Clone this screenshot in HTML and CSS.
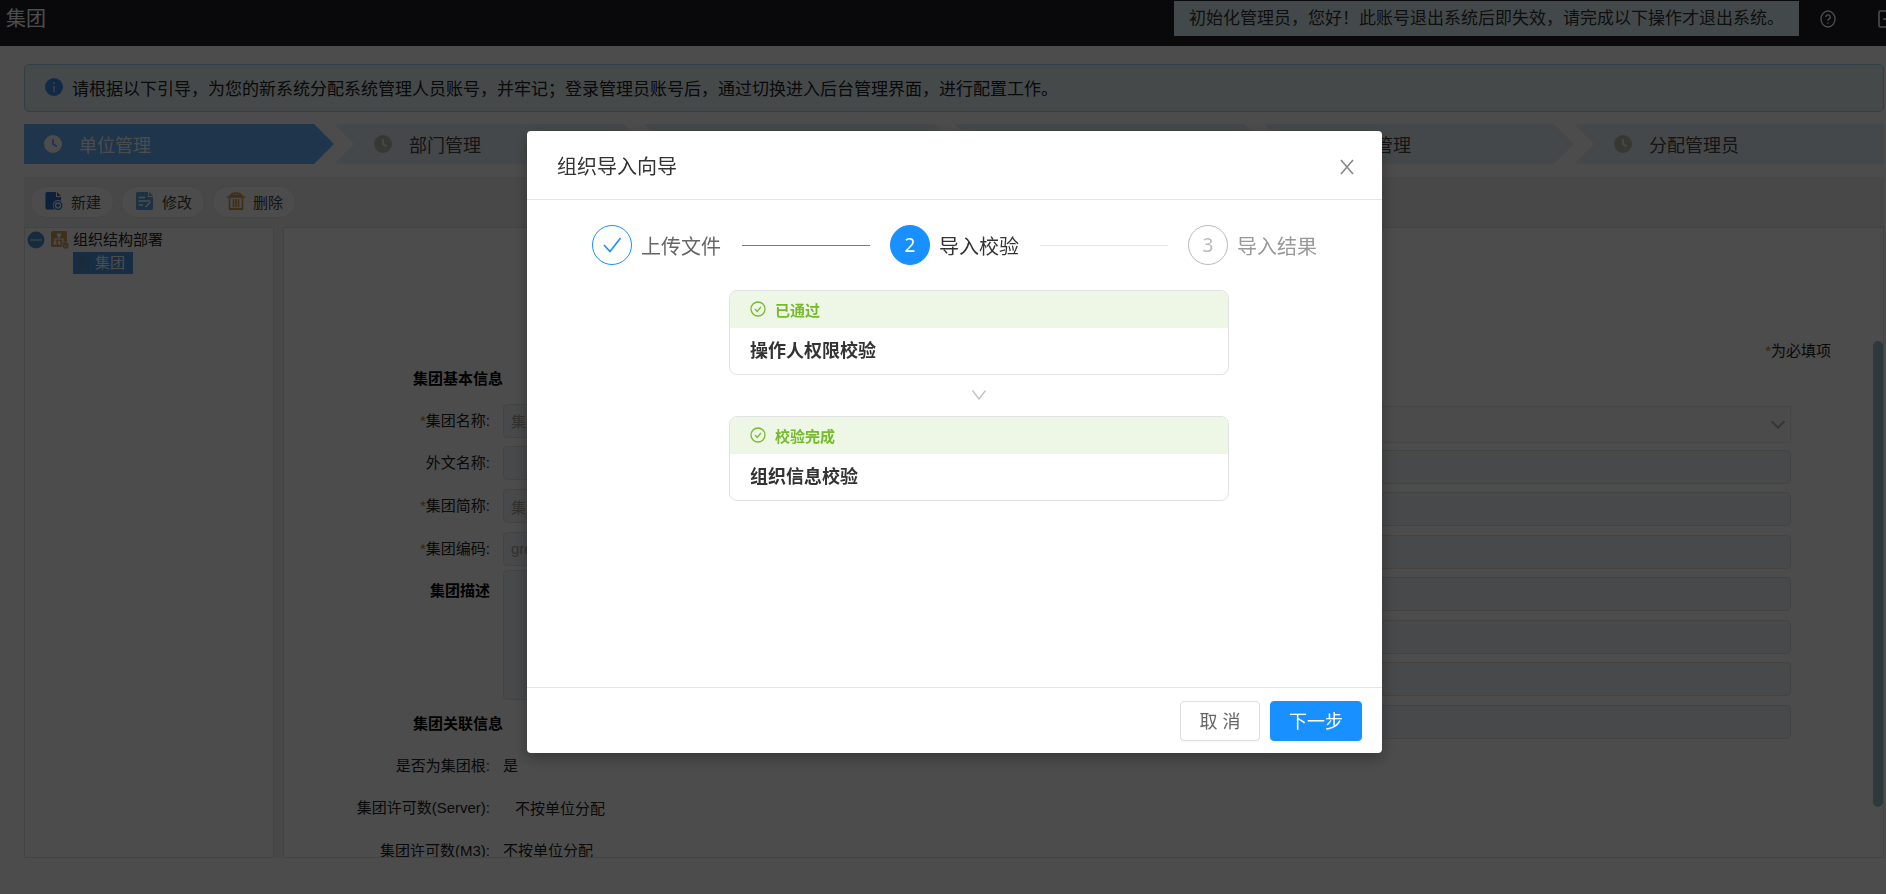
FILE: index.html
```html
<!DOCTYPE html>
<html lang="zh-CN">
<head>
    <meta charset="UTF-8">
    <meta name="viewport" content="width=device-width, initial-scale=1.0">
    <title>集团</title>
    <link rel="stylesheet" href="styles.css">
</head>
<body>
    <div class="page">
        <header class="topbar">
            <h1>集团</h1>
            <div class="topbar-right">
                <p class="notice">初始化管理员，您好！此账号退出系统后即失效，请完成以下操作才退出系统。</p>
                <svg class="help-icon" viewBox="0 0 16 18" fill="none" stroke="currentColor" stroke-width="1.4">
                    <ellipse cx="8" cy="9" rx="7" ry="8"/>
                    <path d="M5.800 7a2.200 2.200 0 1 1 3.300 2c-.8.4-1.100.8-1.100 1.800M8 12.400v1.400"/>
                </svg>
                <svg class="exit-icon" viewBox="0 0 20 18" fill="none" stroke="currentColor" stroke-width="1.6">
                    <path d="M12 5V2.600C12 1.600 11.600 1 10.500 1H2.500C1.500 1 1 1.600 1 2.600v12.800c0 1 .5 1.600 1.500 1.600h8c1 0 1.500-.6 1.500-1.600V13M5 9h13M15 6l3 3-3 3"/>
                </svg>
            </div>
        </header>

        <main class="content">
            <div class="alert">
                <svg class="alert-icon" viewBox="0 0 18 18">
                    <circle cx="9" cy="9" r="9" fill="#3d8ee6"/>
                    <path d="M9 4v2M9 8v6" stroke="#a9cdf2" stroke-width="1.8"/>
                </svg>
                <p>请根据以下引导，为您的新系统分配系统管理人员账号，并牢记；登录管理员账号后，通过切换进入后台管理界面，进行配置工作。</p>
            </div>

            <ol class="guide">
                <li class="active">
                    <svg class="clock" viewBox="0 0 18 18"><circle cx="9" cy="9" r="9" fill="currentColor"/><path d="M9 4v5l4 2.500"/></svg>
                    <span>单位管理</span>
                </li>
                <li>
                    <svg class="clock" viewBox="0 0 18 18"><circle cx="9" cy="9" r="9" fill="currentColor"/><path d="M9 4v5l4 2.500"/></svg>
                    <span>部门管理</span>
                </li>
                <li>
                    <svg class="clock" viewBox="0 0 18 18"><circle cx="9" cy="9" r="9" fill="currentColor"/><path d="M9 4v5l4 2.500"/></svg>
                    <span>岗位管理</span>
                </li>
                <li>
                    <svg class="clock" viewBox="0 0 18 18"><circle cx="9" cy="9" r="9" fill="currentColor"/><path d="M9 4v5l4 2.500"/></svg>
                    <span>职级管理</span>
                </li>
                <li>
                    <svg class="clock" viewBox="0 0 18 18"><circle cx="9" cy="9" r="9" fill="currentColor"/><path d="M9 4v5l4 2.500"/></svg>
                    <span>人员管理</span>
                </li>
                <li>
                    <svg class="clock" viewBox="0 0 18 18"><circle cx="9" cy="9" r="9" fill="currentColor"/><path d="M9 4v5l4 2.500"/></svg>
                    <span>分配管理员</span>
                </li>
            </ol>

            <div class="toolbar">
                <button type="button">
                    <svg viewBox="0 0 18 18">
                        <path d="M2 0h9v5h5v4a5 5 0 0 0-6 8.500H2a1.500 1.500 0 0 1-1.500-1.500V1.500A1.500 1.500 0 0 1 2 0zM12 0l4 4h-4z" fill="#2c6fc4"/>
                        <circle cx="13" cy="13.500" r="3.800" fill="none" stroke="#2c6fc4" stroke-width="1.300"/>
                        <path d="M13 11.500v4M11 13.500h4" stroke="#2c6fc4" stroke-width="1.300"/>
                    </svg>
                    新建
                </button>
                <button type="button">
                    <svg viewBox="0 0 18 18">
                        <path d="M1.500 0H12v5h5v11.500A1.500 1.500 0 0 1 15.500 18h-14A1.500 1.500 0 0 1 0 16.500v-15A1.500 1.500 0 0 1 1.500 0zM13 0l4 4h-4z" fill="#63a5e8"/>
                        <path d="M2.500 5.500H9M2.500 9H14M2.500 13H7M9.500 15l5-5" stroke="#fff" stroke-width="1.600"/>
                    </svg>
                    修改
                </button>
                <button type="button">
                    <svg viewBox="0 0 18 18" fill="none" stroke="#cf9c4f" stroke-width="1.600">
                        <path d="M0 5h18M3 4C4 2 6 1 9 1s5 1 6 3zM2.500 6v10.500h13V6M6.500 7v8M9 7v8M11.500 7v8"/>
                        <path d="M3 3.500h12M2 17h14" stroke-width="2"/>
                    </svg>
                    删除
                </button>
            </div>

            <div class="workspace">
                <aside class="tree">
                    <div class="tree-root">
                        <svg class="tree-toggle" viewBox="0 0 18 18">
                            <circle cx="9" cy="9" r="8.500" fill="#4c8fd6"/>
                            <path d="M3 9h12" stroke="#a9c9ea" stroke-width="1.800"/>
                        </svg>
                        <svg class="tree-icon" viewBox="0 0 18 18">
                            <rect width="16" height="16" rx="1.500" fill="#d2a254"/>
                            <path d="M8 4v4M4 11V8h8v3" fill="none" stroke="#fff" stroke-width="1.200"/>
                            <path d="M6 2.500h4v3H6zM2.500 10.500h3v3h-3zM7 10.500h2.500v3H7z" fill="#fff"/>
                            <circle cx="14.500" cy="14.500" r="3.500" fill="#d2a254" stroke="#fff" stroke-width=".6"/>
                            <path d="M13 14.500l1 1 2-2" fill="none" stroke="#fff" stroke-width=".8"/>
                        </svg>
                        <span>组织结构部署</span>
                    </div>
                    <a href="#" class="tree-node">
                        <svg class="tree-icon" viewBox="0 0 18 18" fill="none" stroke="#6389b5" stroke-width="1.200">
                            <path d="M6 15V3l5-1v13M11 6l4 1v8M4 15h13M8 5v7"/>
                        </svg>
                        <span>集团</span>
                    </a>
                </aside>

                <section class="detail">
                    <p class="required-note"><i>*</i>为必填项</p>
                    <form class="form">
                        <div class="form-col">
                            <div class="form-rows">
                                <h2>集团基本信息</h2>
                                <div class="form-row">
                                    <label for="name"><i>*</i>集团名称:</label>
                                    <input type="text" id="name" value="集团" disabled>
                                </div>
                                <div class="form-row">
                                    <label for="foreignName">外文名称:</label>
                                    <input type="text" id="foreignName" disabled>
                                </div>
                                <div class="form-row">
                                    <label for="shortName"><i>*</i>集团简称:</label>
                                    <input type="text" id="shortName" value="集团" disabled>
                                </div>
                                <div class="form-row">
                                    <label for="code"><i>*</i>集团编码:</label>
                                    <input type="text" id="code" value="group" disabled>
                                </div>
                            </div>
                            <div class="form-row desc">
                                <label for="desc">集团描述</label>
                                <textarea id="desc" disabled></textarea>
                            </div>
                            <div class="form-rows tail">
                                <h2>集团关联信息</h2>
                                <div class="form-row"><span class="key">是否为集团根:</span><span class="value">是</span></div>
                                <div class="form-row"><span class="key">集团许可数(Server):</span><span class="value indent">不按单位分配</span></div>
                                <div class="form-row"><span class="key">集团许可数(M3):</span><span class="value">不按单位分配</span></div>
                            </div>
                        </div>
                        <div class="form-col side">
                            <div class="select-wrap"><select aria-label="状态" disabled><option></option></select></div>
                            <input type="text" aria-label="负责人" disabled>
                            <input type="text" aria-label="地址" disabled>
                            <input type="text" aria-label="邮编" disabled>
                            <input type="text" aria-label="电话" disabled>
                            <input type="text" aria-label="传真" disabled>
                            <input type="text" aria-label="网址" disabled>
                            <input type="text" aria-label="邮箱" disabled>
                        </div>
                    </form>
                    <div class="scrollbar"></div>
                </section>
            </div>
        </main>
    </div>

    <div class="overlay">
        <div class="modal" role="dialog" aria-labelledby="wizardTitle">
            <div class="modal-header">
                <h2 id="wizardTitle">组织导入向导</h2>
                <button type="button" class="close-btn" aria-label="关闭">
                    <svg viewBox="0 0 14 16" fill="none" stroke="currentColor" stroke-width="1.600"><path d="M1 1l12 14M13 1L1 15"/></svg>
                </button>
            </div>
            <div class="modal-body">
                <ol class="steps">
                    <li class="done">
                        <span class="step-num">
                            <svg viewBox="0 0 18 16" fill="none" stroke="currentColor" stroke-width="1.600"><path d="M1 8l6 6.500L17.500 1"/></svg>
                        </span>
                        <span>上传文件</span>
                    </li>
                    <li class="current"><span class="step-num">2</span><span>导入校验</span></li>
                    <li class="wait"><span class="step-num">3</span><span>导入结果</span></li>
                </ol>

                <div class="checks">
                    <div class="check-card">
                        <div class="check-status">
                            <svg viewBox="0 0 16 16" fill="none" stroke="currentColor" stroke-width="1.300"><circle cx="8" cy="8" r="7"/><path d="M5 8l2.200 2.400L11 5.800"/></svg>
                            已通过
                        </div>
                        <div class="check-title">操作人权限校验</div>
                    </div>
                    <svg class="arrow" viewBox="0 0 14 10" fill="none" stroke="#bcc0c0" stroke-width="1.300"><path d="M.5.5L7 9l6.500-8.500"/></svg>
                    <div class="check-card">
                        <div class="check-status">
                            <svg viewBox="0 0 16 16" fill="none" stroke="currentColor" stroke-width="1.300"><circle cx="8" cy="8" r="7"/><path d="M5 8l2.200 2.400L11 5.800"/></svg>
                            校验完成
                        </div>
                        <div class="check-title">组织信息校验</div>
                    </div>
                </div>
            </div>
            <div class="modal-footer">
                <button type="button" class="cancel-btn">取 消</button>
                <button type="button" class="next-btn">下一步</button>
            </div>
        </div>
    </div>
</body>
</html>
```
FILE: styles.css
```css
* {
    box-sizing: border-box;
}
body {
    margin: 0;
    font-family: "Liberation Sans", "Noto Sans CJK SC", sans-serif;
    font-size: 15px;
    color: #222;
    background: #fff;
    overflow: hidden;
}
h1, h2, p, ol {
    margin: 0;
    padding: 0;
    font-weight: normal;
}
ol {
    list-style: none;
}
i {
    font-style: normal;
    color: #b87840;
}
button, input, select, textarea {
    font-family: inherit;
}
svg {
    flex: none;
}
.page {
    display: flex;
    flex-direction: column;
    height: 100vh;
}

/* top bar */
.topbar {
    display: flex;
    justify-content: space-between;
    flex: none;
    height: 46px;
    padding-left: 6px;
    background: #202028;
    overflow: hidden;
}
.topbar h1 {
    font-size: 20px;
    line-height: 38px;
    color: #fff;
}
.topbar-right {
    display: flex;
    align-items: center;
    height: 37px;
    margin-right: -12px;
    color: #fff;
}
.notice {
    height: 35px;
    padding: 0 15px;
    font-size: 17px;
    line-height: 35px;
    white-space: nowrap;
    color: #333;
    background: #e2f5fa;
}
.help-icon {
    width: 16px;
    margin: 0 42px 0 21px;
}
.exit-icon {
    width: 20px;
}

/* page content */
.content {
    display: flex;
    flex-direction: column;
    flex: 1;
    min-height: 0;
    padding: 18px 2px 36px 24px;
}
.alert {
    display: flex;
    align-items: center;
    gap: 9px;
    flex: none;
    height: 48px;
    margin-bottom: 12px;
    padding: 0 0 2px 20px;
    font-size: 17px;
    border: 1px solid #9dd4e6;
    border-radius: 5px;
    background: #e6f5f9;
}
.alert-icon {
    width: 18px;
}
.guide {
    display: grid;
    grid-template-columns: repeat(6, 1fr);
    flex: none;
    height: 40px;
    margin-bottom: 13px;
}
.guide li {
    display: flex;
    align-items: center;
    gap: 17px;
    padding-left: 40px;
    font-size: 18px;
    color: #444;
    background: #e8f2f7;
    clip-path: polygon(0 0, calc(100% - 20px) 0, 100% 50%, calc(100% - 20px) 100%, 0 100%, 20px 50%);
}
.guide li:last-child {
    clip-path: polygon(0 0, 100% 0, 100% 100%, 0 100%, 20px 50%);
}
.guide li.active {
    padding-left: 20px;
    color: #fff;
    background: #64b1ff;
    clip-path: polygon(0 0, calc(100% - 20px) 0, 100% 50%, calc(100% - 20px) 100%, 0 100%);
}
.clock {
    width: 18px;
    color: #b4bcae;
}
.clock path {
    fill: none;
    stroke: #e8f2f7;
    stroke-width: 2;
}
.active .clock {
    color: #fff;
}
.active .clock path {
    stroke: #64b1ff;
}
.toolbar {
    display: flex;
    gap: 7px;
    flex: none;
    height: 50px;
    padding: 9px 6px;
    background: #f1f1f1;
}
.toolbar button {
    display: flex;
    align-items: center;
    justify-content: center;
    gap: 8px;
    width: 84px;
    height: 32px;
    padding: 0 0 2px 2px;
    font-size: 15px;
    color: #444;
    border: 1px solid #e8e8e8;
    border-radius: 16px;
    background: #fff;
}
.toolbar svg {
    width: 18px;
}
.workspace {
    display: flex;
    gap: 9px;
    flex: 1;
    min-height: 0;
    background: #f1f1f1;
}

/* organisation tree */
.tree {
    width: 250px;
    flex: none;
    padding: 0 2px;
    border: 1px solid #dfdfdf;
    background: #fff;
}
.tree-root {
    display: flex;
    align-items: center;
    height: 24px;
}
.tree-root span,
.tree-node span {
    padding-bottom: 3px;
}
.tree-toggle {
    width: 18px;
    margin-right: 6px;
}
.tree-icon {
    width: 18px;
    margin-right: 4px;
}
.tree-node {
    display: inline-flex;
    align-items: center;
    height: 22px;
    margin-left: 46px;
    padding-right: 8px;
    color: #fff;
    text-decoration: none;
    background: #4e96e0;
}

/* detail form */
.detail {
    position: relative;
    flex: 1;
    padding: 116px 92px 0 0;
    border: 1px solid #dfdfdf;
    background: #fff;
    overflow: hidden;
}
.required-note {
    margin-right: -40px;
    line-height: 13px;
    text-align: right;
}
.form {
    display: grid;
    grid-template-columns: 1fr 1fr;
}
.form-rows {
    display: grid;
    grid-auto-rows: 1fr;
    height: 213px;
    align-items: center;
}
.form-rows.tail {
    height: 170px;
}
.form h2 {
    width: 219px;
    padding-bottom: 2px;
    font-size: 15px;
    font-weight: bold;
    text-align: right;
    color: #000;
}
.form-row {
    display: grid;
    grid-template-columns: 219px 1fr;
    align-items: center;
}
.form-row label,
.form-row .key {
    padding: 0 13px 3px 0;
    text-align: right;
}
.form-row .value {
    padding-bottom: 2px;
}
.form-row .indent {
    padding-left: 12px;
}
.form input,
.form select,
.form textarea {
    width: 100%;
    height: 34px;
    padding: 0 7px;
    font-size: 15px;
    color: #a8a498;
    border: 1px solid #dfdfdc;
    border-radius: 4px;
    background: #f1f3f7;
}
.form select {
    display: block;
    height: 37px;
    appearance: none;
    border-radius: 0;
    background: #f8f8f8;
}
.form-row.desc {
    height: 132px;
    align-items: start;
}
.desc label {
    font-weight: bold;
    line-height: 42px;
    color: #000;
}
.form .desc textarea {
    display: block;
    height: 130px;
    resize: none;
}
.form-col.side {
    display: grid;
    grid-auto-rows: 1fr;
    align-items: center;
    height: 386px;
    padding: 46px 0 0 219px;
}
.select-wrap {
    position: relative;
}
.select-wrap::after {
    content: '';
    position: absolute;
    right: 8px;
    top: 11px;
    width: 8px;
    height: 8px;
    border: solid #b4b4b4;
    border-width: 0 2px 2px 0;
    transform: rotate(45deg);
}
.scrollbar {
    position: absolute;
    top: 18%;
    right: 0;
    width: 10px;
    height: 74%;
    border-radius: 5px;
    background: #9cbfcb;
}

/* import wizard */
.overlay {
    position: fixed;
    inset: 0;
    display: flex;
    align-items: flex-start;
    justify-content: center;
    padding: 131px 0 0 23px;
    background: rgba(0, 0, 0, 0.7);
}
.modal {
    display: flex;
    flex-direction: column;
    width: 855px;
    border-radius: 4px;
    background: #fff;
    box-shadow: 0 5px 15px rgba(0, 0, 0, 0.3);
}
.modal-header {
    display: flex;
    align-items: center;
    justify-content: space-between;
    height: 69px;
    padding: 0 28px 0 30px;
    border-bottom: 1px solid #e4e4e4;
}
.modal-header h2 {
    font-size: 20px;
    color: #333;
}
.close-btn {
    padding: 4px 0 0;
    border: none;
    background: none;
    color: #888;
    cursor: pointer;
}
.close-btn svg {
    display: block;
    width: 14px;
}
.modal-body {
    min-height: 487px;
    padding: 25px 0;
}
.steps {
    display: flex;
    padding: 0 65px;
    margin-bottom: 25px;
}
.steps li {
    display: flex;
    align-items: center;
    gap: 9px;
    font-size: 20px;
}
.steps li:not(:last-child) {
    flex: 1;
}
.steps li:not(:last-child)::after {
    content: '';
    flex: 1;
    height: 1px;
    margin: 0 20px 0 12px;
    background: #e4e4e4;
}
.steps li.done::after {
    background: #1890ff;
}
.step-num {
    display: flex;
    align-items: center;
    justify-content: center;
    width: 40px;
    height: 40px;
    border: 1px solid #b8bcbc;
    border-radius: 50%;
    font-family: "Noto Sans", sans-serif;
    font-size: 19px;
}
.step-num svg {
    width: 18px;
}
.done {
    color: #666;
}
.done .step-num {
    color: #1890ff;
    border-color: #1890ff;
}
.current {
    color: #333;
}
.current .step-num {
    color: #fff;
    border-color: #1890ff;
    background: #1890ff;
}
.wait {
    color: #999;
}
.wait .step-num {
    color: #bbb;
}
.checks {
    display: flex;
    flex-direction: column;
    align-items: center;
    width: 500px;
    margin-left: 202px;
}
.check-card {
    width: 100%;
    height: 85px;
    border: 1px solid #e2e2e2;
    border-radius: 8px;
    overflow: hidden;
}
.check-status {
    display: flex;
    align-items: center;
    gap: 9px;
    height: 37px;
    padding: 0 20px 1px;
    font-weight: bold;
    color: #76bb2c;
    background: #eef6e5;
}
.check-status svg {
    width: 16px;
}
.check-title {
    padding: 0 20px;
    font-size: 18px;
    font-weight: bold;
    line-height: 47px;
    color: #333;
}
.arrow {
    width: 14px;
    margin: 15px 0 16px;
}
.modal-footer {
    display: flex;
    justify-content: flex-end;
    gap: 10px;
    height: 66px;
    padding: 13px 20px;
    border-top: 1px solid #e4e4e4;
}
.modal-footer button {
    min-width: 80px;
    height: 40px;
    padding: 0 18px 2px;
    font-size: 18px;
    border: 1px solid #dedede;
    border-radius: 4px;
    background: #fff;
    color: #666;
    box-shadow: 0 2px 0 rgba(0, 0, 0, 0.02);
    cursor: pointer;
}
.modal-footer .next-btn {
    color: #fff;
    border-color: #1890ff;
    background: #1890ff;
}
```
